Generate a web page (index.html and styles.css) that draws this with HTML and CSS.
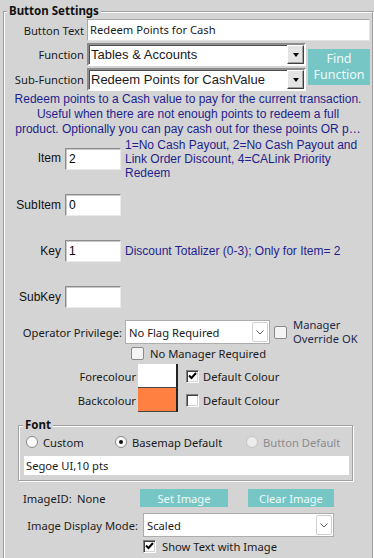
FILE: index.html
```html
<!DOCTYPE html>
<html lang="en">
  <head>
    <meta charset="UTF-8" />
    <title>Button Settings</title>
    <link rel="stylesheet" href="styles.css">
  </head>
  <body>
    <fieldset class="group main">
      <legend>Button Settings</legend>

      <!-- Text / function pickers -->
      <div class="top">
        <span class="lbl">Button Text</span>
        <div class="textbox span2">Redeem Points for Cash</div>

        <span class="lbl">Function</span>
        <div class="combo classic">
          <span class="val">Tables &amp; Accounts</span>
          <span class="drop"><i></i></span>
        </div>
        <button class="teal find">Find<br>Function</button>

        <span class="lbl">Sub-Function</span>
        <div class="combo classic">
          <span class="val">Redeem Points for CashValue</span>
          <span class="drop"><i></i></span>
        </div>
      </div>

      <p class="note">
        Redeem points to a Cash value to pay for the current transaction.<br>
        Useful when there are not enough points to redeem a full<br>
        product. Optionally you can pay cash out for these points OR p…
      </p>

      <!-- Parameters -->
      <div class="param item">
        <span class="plbl">Item</span>
        <div class="pbox">2</div>
        <span class="desc">1=No Cash Payout, 2=No Cash Payout and<br>Link Order Discount, 4=CALink Priority<br>Redeem</span>
      </div>
      <div class="param subitem">
        <span class="plbl">SubItem</span>
        <div class="pbox">0</div>
      </div>
      <div class="param key">
        <span class="plbl">Key</span>
        <div class="pbox">1</div>
        <span class="desc">Discount Totalizer (0-3); Only for Item= 2</span>
      </div>
      <div class="param subkey">
        <span class="plbl">SubKey</span>
        <div class="pbox"></div>
      </div>

      <!-- Privilege -->
      <div class="priv">
        <span class="privlbl">Operator Privilege:</span>
        <div class="combo modern privcombo">
          <span class="val">No Flag Required</span>
          <span class="chev"><svg width="8" height="5" viewBox="0 0 8 5"><path d="M0.5 0.5 L4 4 L7.5 0.5" fill="none" stroke="#606060" stroke-width="1"/></svg></span>
        </div>
        <span class="check modern override"></span>
        <span class="overtext">Manager<br>Override OK</span>
      </div>
      <div class="nomgr">
        <span class="check modern"></span>
        <span>No Manager Required</span>
      </div>

      <!-- Colours -->
      <div class="colour forerow">
        <span class="clbl">Forecolour</span>
        <span class="swatch fore"></span>
        <span class="check classic checked"><svg width="9" height="8" viewBox="0 0 9 8"><path d="M1 3.5 L3.5 6 L8 1" fill="none" stroke="#000" stroke-width="2"/></svg></span>
        <span>Default Colour</span>
      </div>
      <div class="colour">
        <span class="clbl">Backcolour</span>
        <span class="swatch back"></span>
        <span class="check classic"></span>
        <span>Default Colour</span>
      </div>

      <!-- Font -->
      <fieldset class="group font">
        <legend>Font</legend>
        <div class="radios">
          <label class="radio r1"><span class="dot"></span>Custom</label>
          <label class="radio r2"><span class="dot on"></span>Basemap Default</label>
          <label class="radio r3 off"><span class="dot"></span>Button Default</label>
        </div>
        <div class="fontname">Segoe UI,10 pts</div>
      </fieldset>

      <!-- Image -->
      <div class="image">
        <span class="imgid">ImageID:</span>
        <span class="none">None</span>
        <button class="teal setimg">Set Image</button>
        <button class="teal clearimg">Clear Image</button>
      </div>
      <div class="mode">
        <span class="modelbl">Image Display Mode:</span>
        <div class="combo modern modecombo">
          <span class="val">Scaled</span>
          <span class="chev"><svg width="8" height="5" viewBox="0 0 8 5"><path d="M0.5 0.5 L4 4 L7.5 0.5" fill="none" stroke="#606060" stroke-width="1"/></svg></span>
        </div>
      </div>
      <div class="showtext">
        <span class="check classic checked"><svg width="9" height="8" viewBox="0 0 9 8"><path d="M1 3.5 L3.5 6 L8 1" fill="none" stroke="#000" stroke-width="2"/></svg></span>
        <span>Show Text with Image</span>
      </div>
    </fieldset>
  </body>
</html>
```

FILE: styles.css
```css
* {
  margin: 0;
  padding: 0;
  box-sizing: border-box;
}

body {
  width: 374px;
  height: 558px;
  overflow: hidden;
  background: #d4d4d4;
  font-family: "Noto Sans", sans-serif;
  font-size: 11.2px;
  color: #1a1a1a;
}

/* Etched group boxes */
.group {
  border: 1px solid #a0a0a0;
  box-shadow: inset 1px 1px 0 #fff, 1px 1px 0 #fff;
}

.group legend {
  font-weight: bold;
  font-size: 11.5px;
  line-height: 16px;
  padding: 0 2px;
  color: #111;
  background: #d4d4d4;
}

.main {
  margin: 3px 2px 0 3px;
  width: 370px;
  padding: 0 0 30px 0;
}

.main > legend {
  margin-left: 3px;
}

/* Top pickers */
.top {
  display: grid;
  grid-template-columns: 81px 219px 62px;
  grid-template-rows: 22px 23px 23px;
  column-gap: 2px;
  row-gap: 2px;
}

.lbl {
  align-self: center;
  text-align: right;
  padding-right: 1px;
  white-space: nowrap;
}

.textbox {
  background: #fff;
  border: 1px solid #a8a8a8;
  border-right-color: #e2e2e2;
  border-bottom-color: #e2e2e2;
  padding-left: 2px;
  line-height: 20px;
}

.span2 {
  grid-column: 2 / 4;
}

.combo {
  display: flex;
  align-items: center;
  background: #fff;
  white-space: nowrap;
  overflow: hidden;
}

.combo .val {
  flex: 1;
}

.combo.classic {
  border: 2px solid;
  border-color: #8c8c8c #fff #fff #8c8c8c;
  box-shadow: inset 1px 1px 0 #505050;
  font-family: "Liberation Sans", Arial, sans-serif;
  font-size: 13px;
  padding-left: 2px;
}

.drop {
  width: 17px;
  height: 19px;
  display: flex;
  align-items: center;
  justify-content: center;
  background: #e4e4e4;
  border: 1px solid;
  border-color: #fff #404040 #404040 #fff;
  box-shadow: inset -1px -1px 0 #a0a0a0;
}

.drop i {
  width: 0;
  height: 0;
  border-top: 4px solid #000;
  border-left: 3.5px solid transparent;
  border-right: 3.5px solid transparent;
  margin-top: 1px;
}

.teal {
  background: #76c6c5;
  color: #effafa;
  border: none;
  font-family: "Noto Sans", sans-serif;
}

.find {
  grid-column: 3;
  grid-row: 2 / 4;
  align-self: center;
  height: 36px;
  font-size: 12.5px;
  line-height: 16px;
}

/* Description */
.note {
  margin-top: 1px;
  font-family: "Liberation Sans", Arial, sans-serif;
  font-size: 12px;
  line-height: 15px;
  color: #1f1f8e;
  text-align: center;
  white-space: nowrap;
}

/* Item / key rows */
.param {
  display: flex;
  align-items: center;
  font-family: "Liberation Sans", Arial, sans-serif;
  font-size: 12px;
}

.plbl {
  width: 57px;
  text-align: right;
  color: #111;
}

.pbox {
  width: 56px;
  height: 22px;
  margin-left: 4px;
  background: #fff;
  border: 1px solid;
  border-color: #8c8c8c #eaeaea #eaeaea #8c8c8c;
  box-shadow: inset 1px 1px 0 #c8c8c8;
  padding-left: 3px;
  line-height: 20px;
  color: #000;
}

.desc {
  margin-left: 4px;
  color: #1f1f8e;
  white-space: nowrap;
}

.item {
  margin-top: 1px;
  align-items: flex-start;
}

.item .plbl {
  margin-top: 10px;
  line-height: 20px;
}

.item .pbox {
  margin-top: 10px;
}

.item .desc {
  line-height: 14px;
}

.subitem {
  margin-top: 14px;
}

.key,
.subkey {
  margin-top: 24px;
}

/* Privilege */
.priv {
  display: flex;
  align-items: center;
  height: 28px;
  margin-top: 10px;
}

.privlbl {
  width: 118px;
  text-align: right;
}

.combo.modern {
  height: 24px;
  border: 1px solid #adadad;
  padding-left: 3px;
}

.privcombo {
  width: 145px;
  margin-left: 3px;
}

.chev {
  width: 16px;
  height: 20px;
  margin-right: 1px;
  border: 1px solid #d0d0d0;
  border-radius: 2px;
  display: flex;
  align-items: center;
  justify-content: center;
}

.check {
  width: 13px;
  height: 13px;
  flex: none;
  display: flex;
  align-items: center;
  justify-content: center;
}

.check.modern {
  border: 1px solid #8a8a8a;
  border-radius: 2px;
  background: #f4f4f4;
}

.check.classic {
  background: #fff;
  border: 1px solid;
  border-color: #808080 #fff #fff #808080;
  box-shadow: inset 1px 1px 0 #404040, inset -1px -1px 0 #d4d4d4;
}

.override {
  margin-left: 4px;
}

.overtext {
  margin-left: 6px;
  line-height: 14px;
  color: #1e2b4a;
}

.nomgr {
  display: flex;
  align-items: center;
  gap: 6px;
  height: 14px;
  margin-left: 127px;
}

/* Colours */
.colour {
  display: flex;
  align-items: center;
  height: 24px;
}

.forerow {
  margin-top: 4px;
}

.clbl {
  width: 132px;
  text-align: right;
}

.swatch {
  width: 40px;
  height: 24px;
  margin-left: 2px;
  border-right: 2px solid #222;
  border-bottom: 1px solid #444;
}

.fore {
  background: #fff;
}

.back {
  background: #ff8040;
}

.colour .check {
  margin-left: 8px;
  margin-right: 4px;
}

/* Font box */
.font {
  margin: 5px 0 0 14px;
  width: 335px;
  padding: 0 0 5px 0;
}

.font legend {
  margin-left: 4px;
}

.radios {
  display: flex;
  height: 18px;
  align-items: center;
}

.radio {
  display: flex;
  align-items: center;
  gap: 5px;
  white-space: nowrap;
}

.r1 {
  margin-left: 7px;
  width: 89px;
}

.r2 {
  width: 131px;
}

.dot {
  width: 12px;
  height: 12px;
  flex: none;
  border-radius: 50%;
  border: 1px solid #8a8a8a;
  background: #fbfbfb;
  display: flex;
  align-items: center;
  justify-content: center;
}

.dot.on::after {
  content: "";
  width: 4px;
  height: 4px;
  border-radius: 50%;
  background: #111;
}

.off {
  color: #8c8c8c;
}

.off .dot {
  border-color: #c4c4c4;
  background: #ececec;
}

.fontname {
  margin: 5px 0 0 5px;
  width: 325px;
  height: 19px;
  background: #fff;
  padding-left: 2px;
  line-height: 19px;
}

/* Image */
.image {
  display: flex;
  align-items: center;
  margin-top: 8px;
  height: 18px;
}

.imgid {
  margin-left: 19px;
  width: 54px;
}

.none {
  width: 63px;
}

.image .teal {
  height: 18px;
  font-size: 11.2px;
}

.setimg {
  width: 88px;
}

.clearimg {
  width: 86px;
  margin-left: 20px;
}

.mode {
  display: flex;
  align-items: center;
  margin-top: 6px;
}

.modelbl {
  width: 134px;
  text-align: right;
  color: #2a1d1d;
}

.modecombo {
  width: 191px;
  margin-left: 5px;
}

.showtext {
  display: flex;
  align-items: center;
  gap: 6px;
  height: 14px;
  margin: 2px 0 0 139px;
}
```
